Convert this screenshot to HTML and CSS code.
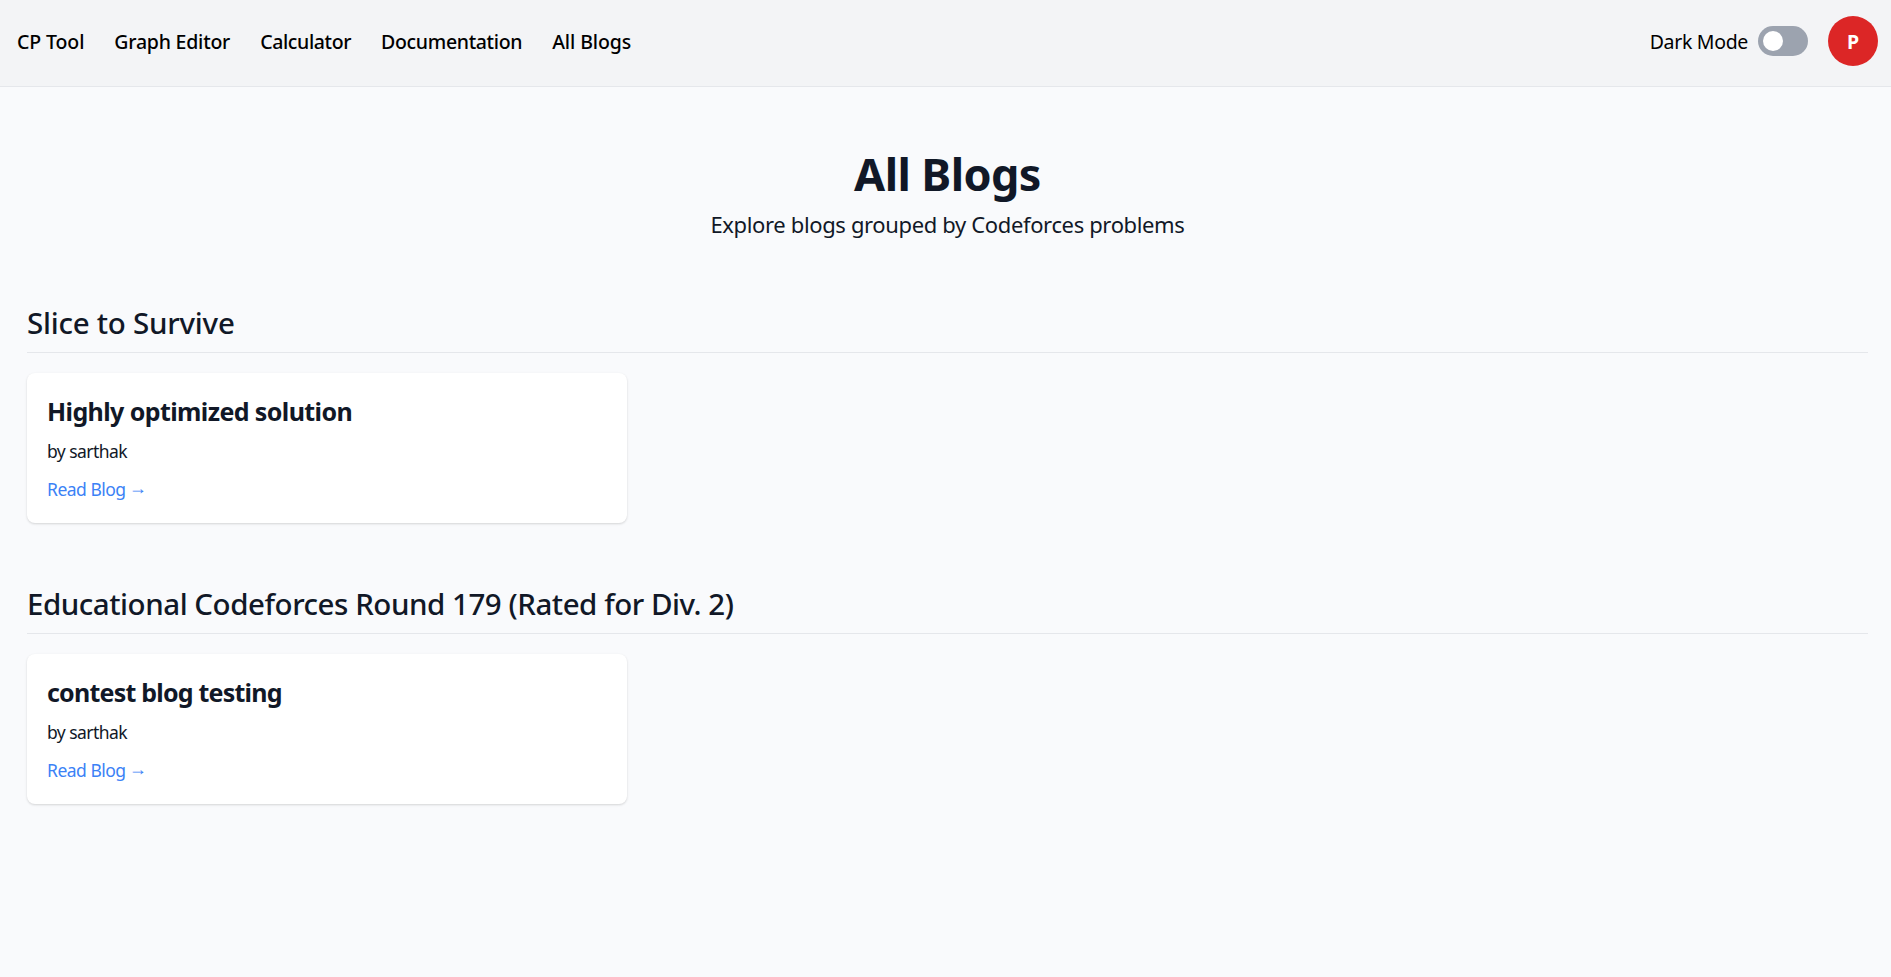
FILE: index.html
```html
<!DOCTYPE html>
<html lang="en">
<head>
<meta charset="utf-8">
<title>All Blogs</title>
<link rel="stylesheet" href="styles.css">
</head>
<body>
<header class="navbar">
  <nav class="nav-links">
    <a class="nav-link nav-cp">CP Tool</a>
    <a class="nav-link nav-graph">Graph Editor</a>
    <a class="nav-link nav-calc">Calculator</a>
    <a class="nav-link nav-docs">Documentation</a>
    <a class="nav-link nav-blogs">All Blogs</a>
  </nav>
  <div class="nav-actions">
    <span class="mode-label">Dark Mode</span>
    <span class="toggle"><span class="knob"></span></span>
    <span class="avatar">P</span>
  </div>
</header>
<main class="content">
  <div class="hero">
    <h1 class="title">All Blogs</h1>
    <p class="subtitle">Explore blogs grouped by Codeforces problems</p>
  </div>
  <section class="group">
    <h2 class="group-title">Slice to Survive</h2>
    <article class="card">
      <h3 class="card-title">Highly optimized solution</h3>
      <p class="author">by sarthak</p>
      <a class="read">Read Blog <span class="arrow">→</span></a>
    </article>
  </section>
  <section class="group">
    <h2 class="group-title group-title-long">Educational Codeforces Round 179 (Rated for Div. 2)</h2>
    <article class="card">
      <h3 class="card-title card-title-short">contest blog testing</h3>
      <p class="author">by sarthak</p>
      <a class="read">Read Blog <span class="arrow">→</span></a>
    </article>
  </section>
</main>
</body>
</html>
```
FILE: styles.css
```css
* { box-sizing: border-box; margin: 0; padding: 0; }
body {
  min-height: 977px;
  background: #f9fafc;
  color: #111827;
  font-family: "Noto Sans", "Open Sans", sans-serif;
}
.navbar {
  display: flex;
  justify-content: space-between;
  align-items: flex-start;
  height: 87px;
  padding: 16px 13px 0 17px;
  background: #f3f4f6;
  border-bottom: 1px solid #e5e7eb;
  color: #000;
  font-size: 19.5px;
  line-height: 50px;
  white-space: nowrap;
}
.nav-links { display: flex; gap: 30px; padding-top: 1px; }
.nav-link { font-weight: 500; letter-spacing: -0.25px; }
.nav-cp { letter-spacing: -0.1px; }
.nav-graph { letter-spacing: -0.22px; }
.nav-calc { letter-spacing: -0.37px; }
.nav-docs { letter-spacing: -0.33px; }
.nav-blogs { letter-spacing: -0.1px; }
.nav-actions { display: flex; align-items: center; height: 50px; }
.mode-label { letter-spacing: -0.32px; margin-right: 10px; padding-top: 2px; }
.toggle {
  display: flex;
  align-items: center;
  width: 50px;
  height: 30px;
  margin-right: 20px;
  padding: 5px;
  border-radius: 15px;
  background: #9ca3af;
}
.knob { width: 20px; height: 20px; border-radius: 50%; background: #fff; }
.avatar {
  width: 50px;
  height: 50px;
  border-radius: 50%;
  background: #dc2626;
  color: #fff;
  font-weight: 700;
  line-height: 52px;
  text-align: center;
}
.content { padding: 57px 23px 0 27px; }
.hero { height: 150px; text-align: center; }
.title { font-size: 45px; font-weight: 700; line-height: 60px; letter-spacing: -0.6px; }
.subtitle { font-size: 22px; line-height: 40px; letter-spacing: -0.36px; }
.group { height: 281px; }
.group-title {
  height: 59px;
  margin-bottom: 20px;
  padding-top: 5px;
  border-bottom: 1px solid #e5e7eb;
  font-size: 29.5px;
  font-weight: 500;
  line-height: 48px;
  letter-spacing: -0.24px;
}
.group-title-long { letter-spacing: -0.46px; }
.card {
  width: 600px;
  height: 150px;
  padding: 19px 20px;
  border-radius: 8px;
  background: #fff;
  box-shadow: 0 1px 3px rgba(0, 0, 0, 0.1), 0 1px 2px rgba(0, 0, 0, 0.06);
}
.card-title { font-size: 25px; font-weight: 700; line-height: 38px; letter-spacing: -0.6px; margin-bottom: 2px; }
.card-title-short { letter-spacing: -0.78px; }
.author { font-size: 17.5px; line-height: 38px; letter-spacing: -0.55px; }
.read { display: block; color: #3b82f6; font-size: 17.5px; line-height: 38px; letter-spacing: -0.5px; }
.arrow {
  margin-left: -1px;
  font-family: "Liberation Sans", sans-serif;
  font-size: 18px;
  line-height: 1;
  vertical-align: 2px;
}
```
